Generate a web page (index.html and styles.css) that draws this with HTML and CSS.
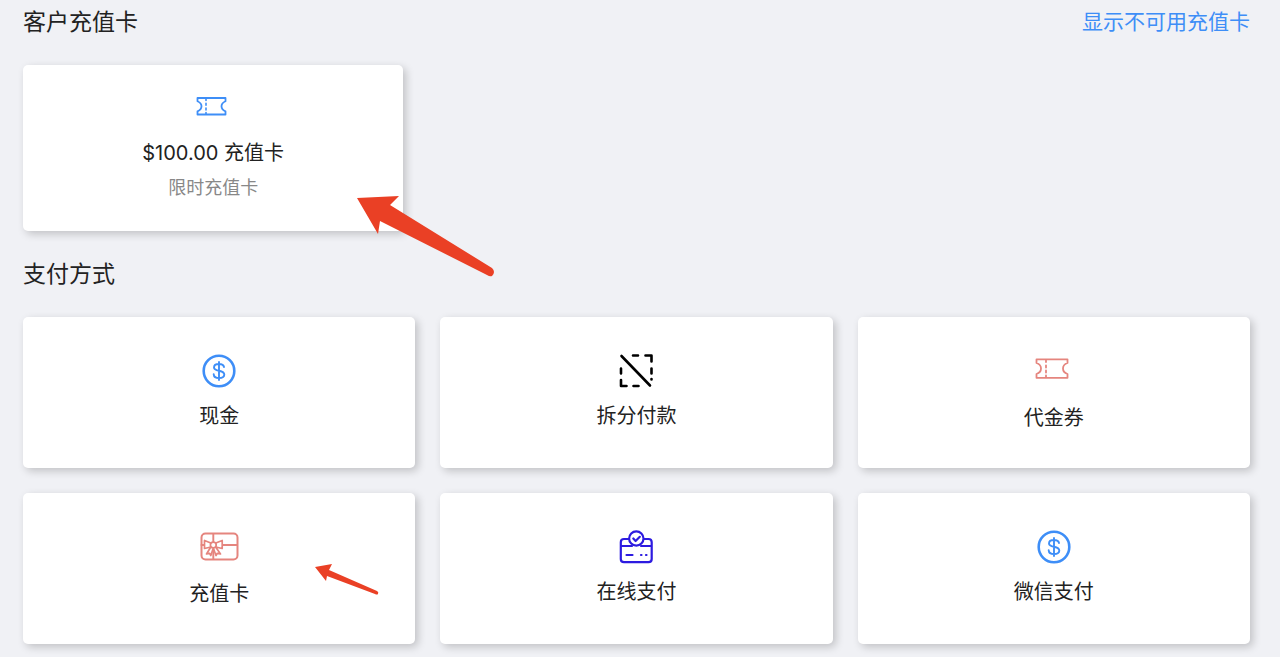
FILE: index.html
```
<!DOCTYPE html>
<html lang="zh-CN">
<head>
    <meta charset="UTF-8">
    <meta name="viewport" content="width=device-width, initial-scale=1.0">
    <title>支付方式</title>
    <link rel="stylesheet" href="styles.css">
</head>
<body>

<section>
    <div class="section-header">
        <h2>客户充值卡</h2>
        <a href="#" class="toggle-link">显示不可用充值卡</a>
    </div>
    <button type="button" class="card customer-card">
        <svg class="icon blue" viewBox="0 0 36 36">
            <path d="M2.500 10H30.500V13.200Q26.500 15 26.500 18.300T30.500 23.400V26.500H2.500V23.400Q6.500 21.600 6.500 18.300T2.500 13.200Z" stroke-width="1.800"/>
            <path d="M11 11V12.500M11 15.300V17.300M11 20V22M11 24.500V26" stroke-width="1.600"/>
        </svg>
        <span class="card-name">$100.00 充值卡</span>
        <span class="card-note">限时充值卡</span>
    </button>
    <svg class="arrow arrow-large" viewBox="0 0 140 82">
        <path d="M1 3L43 1L34 10L136 73Q140 77 136 81Q134 82 131 80L24 26L22 39Z"/>
    </svg>
</section>

<section>
    <div class="section-header">
        <h2>支付方式</h2>
    </div>
    <div class="payment-grid">
        <button type="button" class="card">
            <svg class="icon blue" viewBox="0 0 36 36">
                <circle cx="18" cy="18" r="15.300" stroke-width="2.600"/>
                <path d="M23 14C22.500 11.800 20.500 11 18 11C15.200 11 13 12.200 13 14.400C13 19 23.300 16.500 23.300 21.500C23.300 23.800 21 25 18 25C15 25 12.900 23.800 12.700 21.300M18 9V27" stroke-width="1.900"/>
            </svg>
            <span class="card-name">现金</span>
        </button>

        <button type="button" class="card">
            <svg class="icon black" viewBox="0 0 36 36">
                <path d="M3.500 3L32 32.500M15 2.500H20M27.500 2.500H33.500V8.500M33.500 15.500V20.500M33.500 26V26.500M3 15.500V20.500M3 27V33H8.500M15.500 33H20.500" stroke-width="2.600"/>
            </svg>
            <span class="card-name">拆分付款</span>
        </button>

        <button type="button" class="card">
            <svg class="icon icon-wide red" viewBox="0 0 40 40">
                <path d="M2.500 8.300H33.500V12Q29 13.500 29 17.500T33.500 23V26.800H2.500V23Q7 21.500 7 17.500T2.500 12Z" stroke-width="1.800"/>
                <path d="M12 9.500V11M12 14.300V16.500M12 19.500V21.500M12 24.500V26" stroke-width="1.800"/>
            </svg>
            <span class="card-name">代金券</span>
        </button>

        <button type="button" class="card">
            <svg class="icon icon-wide red" viewBox="0 0 40 40">
                <rect x="2.500" y="6.500" width="36" height="26" rx="4" stroke-width="2"/>
                <path d="M14.300 7V15M14.300 22V32M2.500 18H5M24 18H38" stroke-width="1.900"/>
                <circle cx="14.300" cy="18" r="2.900" stroke-width="1.700"/>
                <path d="M11.800 16L5.500 13.500V21.500L11.800 20M16.800 16L23.200 13.500V21.500L16.800 20M11.500 20.500L7.500 27L10.500 26.300L11.800 28.500L14 22M17 20.500L21.500 27L18.300 26.300L17 28.500L14.600 22" stroke-width="1.700"/>
            </svg>
            <span class="card-name">充值卡</span>
        </button>

        <button type="button" class="card">
            <svg class="icon indigo" viewBox="0 0 36 36">
                <path d="M10.500 10H6Q2.800 10 2.800 13.200V30Q2.800 33.200 6 33.200H30.500Q33.700 33.200 33.700 30V13.200Q33.700 10 30.500 10H26M3 17H14M23 17H33" stroke-width="2.200"/>
                <circle cx="18.300" cy="9.500" r="7.200" stroke-width="2.200"/>
                <path d="M15.300 9.500L17.600 12L21.800 7.800M8.500 26H14.500M23 26H23.500M28 26H28.500" stroke-width="2.200"/>
            </svg>
            <span class="card-name">在线支付</span>
        </button>

        <button type="button" class="card">
            <svg class="icon blue" viewBox="0 0 36 36">
                <circle cx="18" cy="18" r="15.300" stroke-width="2.600"/>
                <path d="M23 14C22.500 11.800 20.500 11 18 11C15.200 11 13 12.200 13 14.400C13 19 23.300 16.500 23.300 21.500C23.300 23.800 21 25 18 25C15 25 12.900 23.800 12.700 21.300M18 9V27" stroke-width="1.900"/>
            </svg>
            <span class="card-name">微信支付</span>
        </button>
    </div>
    <svg class="arrow arrow-small" viewBox="0 0 66 32">
        <path d="M0 3L17 0L14 6L62 27Q64 28 63 30Q62 31 60 30L12 12L11 17Z"/>
    </svg>
</section>

</body>
</html>
```

FILE: styles.css
```
* {
    box-sizing: border-box;
}

body {
    margin: 0;
    padding: 0 30px 12px 23px;
    background-color: #f0f1f5;
    color: #222;
    font-family: Inter, "Noto Sans CJK SC", sans-serif;
}

section {
    position: relative;
}

section + section {
    margin-top: 21px;
}

.section-header {
    display: flex;
    justify-content: space-between;
    align-items: center;
    margin-bottom: 21px;
}

h2 {
    margin: 0;
    font-size: 23px;
    line-height: 44px;
    font-weight: 400;
}

.toggle-link {
    color: #3e8ef7;
    font-size: 21px;
    line-height: 44px;
    text-decoration: none;
}

.card {
    display: flex;
    flex-direction: column;
    align-items: center;
    justify-content: center;
    gap: 12px;
    min-height: 151px;
    padding: 0 0 2px;
    border: none;
    border-radius: 5px;
    background-color: #fff;
    box-shadow: 3px 3px 8px rgba(0, 0, 0, 0.2);
    color: #222;
    font-family: inherit;
    cursor: pointer;
}

.customer-card {
    width: 31%;
    gap: 5px;
    padding: 23px 0 28px;
}

.customer-card .icon {
    margin-bottom: 9px;
}

.card-name {
    font-size: 20px;
    line-height: 30px;
}

.card-note {
    color: #888;
    font-size: 18px;
    line-height: 30px;
}

.payment-grid {
    display: grid;
    grid-template-columns: repeat(3, 1fr);
    gap: 25px;
}

.icon {
    width: 36px;
    height: 36px;
    fill: none;
    stroke: currentColor;
    stroke-linecap: round;
    stroke-linejoin: round;
}

.icon-wide {
    width: 40px;
    height: 40px;
}

.blue {
    color: #3e8ef7;
}

.black {
    color: #000;
}

.red {
    color: #e5857e;
}

.indigo {
    color: #2d1be0;
}

/* pointers over the cards */
.arrow {
    position: absolute;
    fill: #ea4025;
    pointer-events: none;
}

.arrow-large {
    top: 195px;
    left: 333px;
    width: 140px;
}

.arrow-small {
    bottom: 48px;
    left: 292px;
    width: 66px;
}
```
